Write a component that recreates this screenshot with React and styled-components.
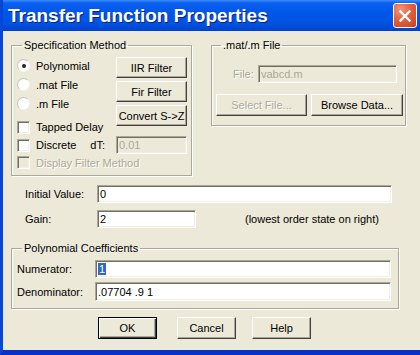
import React from "react";
import styled, { createGlobalStyle } from "styled-components";

const GlobalStyle = createGlobalStyle`
  body {
    margin: 0;
    overflow: hidden;
    background: #ece9d8;
    font-family: "Liberation Sans", Arial, sans-serif;
  }
`;

const Window = styled.div`
  width: 420px;
  height: 355px;
  box-sizing: border-box;
  display: flex;
  flex-direction: column;
  background: #ece9d8;
  border-left: 3px solid #0846d8;
  border-bottom: 5px solid #0831c9;
  overflow: hidden;
`;

const TitleBar = styled.div`
  height: 31px;
  flex: none;
  margin-left: -3px;
  display: flex;
  align-items: center;
  justify-content: space-between;
  padding: 0 3px 0 8px;
  background: linear-gradient(
    180deg,
    #3d8dfb 0px,
    #0a5ff0 3px,
    #0057e8 12px,
    #0054e3 22px,
    #0048d6 29px,
    #0040c8 31px
  );
`;

const Title = styled.span`
  font-family: "Liberation Sans", Arial, sans-serif;
  font-weight: bold;
  font-size: 19px;
  color: #fff;
  text-shadow: 1px 1px 0 #0a1e8c;
  padding-top: 1px;
`;

const CloseButton = styled.div`
  width: 24px;
  height: 25px;
  box-sizing: border-box;
  border: 1px solid #fff;
  border-radius: 3px;
  background: radial-gradient(circle at 30% 25%, #f09676 0%, #e2613c 45%, #c8401c 100%);
  display: flex;
  align-items: center;
  justify-content: center;
`;

const Body = styled.div`
  flex: 1;
  padding: 8px 0 0 8px;
  display: flex;
  flex-direction: column;
  font-size: 11px;
  color: #000;
`;

const TopRow = styled.div`
  display: flex;
  gap: 19px;
  align-items: flex-start;
`;

const Group = styled.fieldset`
  margin: 0;
  width: ${({ $w }) => $w}px;
  box-sizing: border-box;
  padding: ${({ $pad }) => $pad};
  border: 1px solid #aca899;
  box-shadow: inset 1px 1px 0 #fff, 1px 1px 0 #fff;
  min-width: 0;
`;

const Legend = styled.legend`
  margin-left: 5px;
  padding: 0 2px;
  font-size: 11px;
  line-height: 13px;
`;

const SpecGrid = styled.div`
  display: grid;
  grid-template-columns: 99px 71px;
`;

const LeftCol = styled.div`
  display: flex;
  flex-direction: column;
`;

const RightCol = styled.div`
  display: flex;
  flex-direction: column;
  gap: 3px;
  padding-top: 1px;
`;

const OptionRow = styled.div`
  height: ${({ $h }) => $h}px;
  display: flex;
  align-items: center;
  gap: 6px;
  white-space: nowrap;
  color: ${({ $disabled }) => ($disabled ? "#aca899" : "#000")};
  text-shadow: ${({ $disabled }) => ($disabled ? "1px 1px 0 #fff" : "none")};
`;

const Radio = styled.span`
  width: 13px;
  height: 13px;
  box-sizing: border-box;
  flex: none;
  border-radius: 50%;
  border: 1px solid;
  border-color: #c9c6b8 #f4f3ee #f4f3ee #c9c6b8;
  background: #fff;
  display: flex;
  align-items: center;
  justify-content: center;
  &::after {
    content: "";
    width: 4px;
    height: 4px;
    border-radius: 50%;
    background: ${({ $checked }) => ($checked ? "#222" : "transparent")};
  }
`;

const Check = styled.span`
  width: 13px;
  height: 13px;
  box-sizing: border-box;
  flex: none;
  border: 1px solid;
  border-color: #aca899 #fff #fff #aca899;
  box-shadow: inset 1px 1px 0 #716f64, inset -1px -1px 0 #f1efe2;
  background: ${({ $disabled }) => ($disabled ? "#ece9d8" : "#fff")};
`;

const DtLabel = styled.span`
  margin-left: auto;
  margin-right: 11px;
`;

const Button = styled.div`
  width: ${({ $w }) => $w}px;
  height: ${({ $h }) => $h || 22}px;
  box-sizing: border-box;
  display: flex;
  align-items: center;
  justify-content: center;
  background: #ece9d8;
  font-size: 11px;
  white-space: nowrap;
  border: 1px solid;
  border-color: ${({ $default }) =>
    $default ? "#000" : "#fff #404040 #404040 #fff"};
  box-shadow: ${({ $default }) =>
    $default
      ? "inset 1px 1px 0 #fff, inset -1px -1px 0 #404040, inset -2px -2px 0 #aca899"
      : "inset -1px -1px 0 #aca899"};
  color: ${({ $disabled }) => ($disabled ? "#aca899" : "#000")};
  text-shadow: ${({ $disabled }) => ($disabled ? "1px 1px 0 #fff" : "none")};
`;

const Field = styled.div`
  width: ${({ $w }) => $w}px;
  height: ${({ $h }) => $h || 18}px;
  box-sizing: border-box;
  flex: none;
  display: flex;
  align-items: center;
  padding-left: 2px;
  font-size: 11px;
  white-space: nowrap;
  border: 1px solid;
  border-color: #aca899 #fff #fff #aca899;
  box-shadow: inset 1px 1px 0 #716f64, inset -1px -1px 0 #f1efe2;
  background: ${({ $disabled }) => ($disabled ? "#ece9d8" : "#fff")};
  color: ${({ $disabled }) => ($disabled ? "#aca899" : "#000")};
`;

const Selected = styled.span`
  background: #316ac5;
  color: #fff;
  padding: 0 1px;
`;

const FileRow = styled.div`
  display: flex;
  align-items: center;
  padding-left: 17px;
  height: 18px;
`;

const DisabledLabel = styled.span`
  width: 25px;
  color: #aca899;
  text-shadow: 1px 1px 0 #fff;
`;

const FileButtons = styled.div`
  display: flex;
  gap: 4px;
  margin-top: 11px;
`;

const Fields = styled.div`
  display: flex;
  flex-direction: column;
  gap: 7px;
  margin: 9px 0 14px 14px;
`;

const FieldRow = styled.div`
  display: flex;
  align-items: center;
`;

const Label = styled.span`
  width: ${({ $w }) => $w}px;
  flex: none;
`;

const Hint = styled.span`
  margin-left: 49px;
`;

const CoeffRows = styled.div`
  display: flex;
  flex-direction: column;
  gap: 4px;
`;

const ButtonRow = styled.div`
  display: flex;
  margin: 8px 0 0 87px;
`;

const Spacer = styled.div`
  width: ${({ $w }) => $w}px;
`;

export default function App() {
  return (
    <Window>
      <GlobalStyle />
      <TitleBar>
        <Title>Transfer Function Properties</Title>
        <CloseButton>
          <svg width="14" height="14" viewBox="0 0 14 14">
            <path d="M2.5 2.5 L11.5 11.5 M11.5 2.5 L2.5 11.5" stroke="#fff" strokeWidth="2.4" strokeLinecap="square" />
          </svg>
        </CloseButton>
      </TitleBar>
      <Body>
        <TopRow>
          <Group $w={181} $pad="4px 4px 4px 5px">
            <Legend>Specification Method</Legend>
            <SpecGrid>
              <LeftCol>
                <OptionRow $h={19}><Radio $checked />Polynomial</OptionRow>
                <OptionRow $h={19}><Radio />.mat File</OptionRow>
                <OptionRow $h={19}><Radio />.m File</OptionRow>
                <OptionRow $h={18} style={{ marginTop: 5 }}><Check />Tapped Delay</OptionRow>
              </LeftCol>
              <RightCol>
                <Button $w={71} $h={21}>IIR Filter</Button>
                <Button $w={71} $h={21}>Fir Filter</Button>
                <Button $w={71} $h={21}>Convert S-&gt;Z</Button>
              </RightCol>
              <OptionRow $h={18}>
                <Check />Discrete<DtLabel>dT:</DtLabel>
              </OptionRow>
              <OptionRow $h={18}>
                <Field $w={71} $disabled>0.01</Field>
              </OptionRow>
            </SpecGrid>
            <OptionRow $h={17} $disabled><Check $disabled />Display Filter Method</OptionRow>
          </Group>
          <Group $w={195} $pad="13px 2px 9px 4px">
            <Legend>.mat/.m File</Legend>
            <FileRow>
              <DisabledLabel>File:</DisabledLabel>
              <Field $w={139} $disabled>vabcd.m</Field>
            </FileRow>
            <FileButtons>
              <Button $w={91} $disabled>Select File...</Button>
              <Button $w={92}>Browse Data...</Button>
            </FileButtons>
          </Group>
        </TopRow>
        <Fields>
          <FieldRow>
            <Label $w={72}>Initial Value:</Label>
            <Field $w={295}>0</Field>
          </FieldRow>
          <FieldRow>
            <Label $w={72}>Gain:</Label>
            <Field $w={99}>2</Field>
            <Hint>(lowest order state on right)</Hint>
          </FieldRow>
        </Fields>
        <Group $w={388} $pad="5px 7px 7px 5px">
          <Legend>Polynomial Coefficients</Legend>
          <CoeffRows>
            <FieldRow>
              <Label $w={78}>Numerator:</Label>
              <Field $w={296}><Selected>1</Selected></Field>
            </FieldRow>
            <FieldRow>
              <Label $w={78}>Denominator:</Label>
              <Field $w={296} $h={19}>.07704 .9 1</Field>
            </FieldRow>
          </CoeffRows>
        </Group>
        <ButtonRow>
          <Button $w={59} $default>OK</Button>
          <Spacer $w={20} />
          <Button $w={59}>Cancel</Button>
          <Spacer $w={16} />
          <Button $w={59}>Help</Button>
        </ButtonRow>
      </Body>
    </Window>
  );
}
